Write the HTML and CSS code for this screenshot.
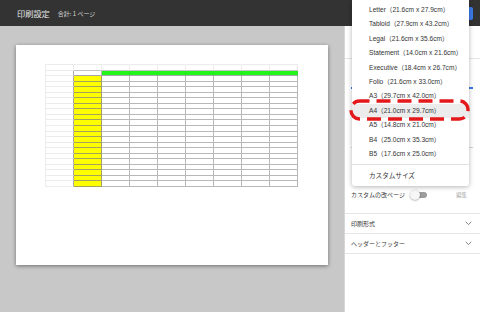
FILE: index.html
```html
<!DOCTYPE html>
<html lang="ja">
<head>
<meta charset="utf-8">
<title>印刷設定</title>
<link rel="stylesheet" href="styles.css">
</head>
<body>
<div class="app">
  <header class="header">
    <span class="title">印刷設定</span>
    <span class="subtitle">合計: 1 ページ</span>
    <span class="next-btn"></span>
  </header>
  <div class="main">
    <section class="canvas">
      <div class="page">
        <div class="sheet">
          <div class="t0"></div><div class="t"></div><div class="t"></div><div class="t"></div><div class="t"></div><div class="t"></div><div class="t"></div><div class="t"></div><div class="t"></div>
          <div class="h"></div><div class="w"></div><div class="g"></div><div class="g"></div><div class="g"></div><div class="g"></div><div class="g"></div><div class="g"></div><div class="g"></div>
          <div class="h"></div><div class="y"></div><div></div><div></div><div></div><div></div><div></div><div></div><div></div>
          <div class="h"></div><div class="y"></div><div></div><div></div><div></div><div></div><div></div><div></div><div></div>
          <div class="h"></div><div class="y"></div><div></div><div></div><div></div><div></div><div></div><div></div><div></div>
          <div class="h"></div><div class="y"></div><div></div><div></div><div></div><div></div><div></div><div></div><div></div>
          <div class="h"></div><div class="y"></div><div></div><div></div><div></div><div></div><div></div><div></div><div></div>
          <div class="h"></div><div class="y"></div><div></div><div></div><div></div><div></div><div></div><div></div><div></div>
          <div class="h"></div><div class="y"></div><div></div><div></div><div></div><div></div><div></div><div></div><div></div>
          <div class="h"></div><div class="y"></div><div></div><div></div><div></div><div></div><div></div><div></div><div></div>
          <div class="h"></div><div class="y"></div><div></div><div></div><div></div><div></div><div></div><div></div><div></div>
          <div class="h"></div><div class="y"></div><div></div><div></div><div></div><div></div><div></div><div></div><div></div>
          <div class="h"></div><div class="y"></div><div></div><div></div><div></div><div></div><div></div><div></div><div></div>
          <div class="h"></div><div class="y"></div><div></div><div></div><div></div><div></div><div></div><div></div><div></div>
          <div class="h"></div><div class="y"></div><div></div><div></div><div></div><div></div><div></div><div></div><div></div>
          <div class="h"></div><div class="y"></div><div></div><div></div><div></div><div></div><div></div><div></div><div></div>
          <div class="h"></div><div class="y"></div><div></div><div></div><div></div><div></div><div></div><div></div><div></div>
          <div class="h"></div><div class="y"></div><div></div><div></div><div></div><div></div><div></div><div></div><div></div>
          <div class="h"></div><div class="y"></div><div></div><div></div><div></div><div></div><div></div><div></div><div></div>
          <div class="h"></div><div class="y"></div><div></div><div></div><div></div><div></div><div></div><div></div><div></div>
          <div class="h"></div><div class="y"></div><div></div><div></div><div></div><div></div><div></div><div></div><div></div>
          <div class="h"></div><div class="y"></div><div></div><div></div><div></div><div></div><div></div><div></div><div></div>
        </div>
      </div>
    </section>
    <aside class="panel">
      <div class="p-top"></div>
      <div class="sel sel-active"></div>
      <div class="sel sel-plain"></div>
      <div class="toggle-row">
        <span class="toggle-label">カスタムの改ページ</span>
        <span class="toggle"><span class="track"></span><span class="knob"></span></span>
        <span class="edit">編集</span>
      </div>
      <div class="acc-list">
        <div class="acc"><span>印刷形式</span><svg class="chev" width="7" height="5" viewBox="0 0 7 5"><path d="M0.8 0.8 L3.5 3.6 L6.2 0.8" fill="none" stroke="#777" stroke-width="0.9"/></svg></div>
        <div class="acc"><span>ヘッダーとフッター</span><svg class="chev" width="7" height="5" viewBox="0 0 7 5"><path d="M0.8 0.8 L3.5 3.6 L6.2 0.8" fill="none" stroke="#777" stroke-width="0.9"/></svg></div>
      </div>
    </aside>
  </div>
</div>

<ul class="menu">
  <li class="item">Letter（21.6cm x 27.9cm）</li>
  <li class="item">Tabloid（27.9cm x 43.2cm）</li>
  <li class="item">Legal（21.6cm x 35.6cm）</li>
  <li class="item">Statement（14.0cm x 21.6cm）</li>
  <li class="item">Executive（18.4cm x 26.7cm）</li>
  <li class="item">Folio（21.6cm x 33.0cm）</li>
  <li class="item">A3（29.7cm x 42.0cm）</li>
  <li class="item selected">A4（21.0cm x 29.7cm）</li>
  <li class="item">A5（14.8cm x 21.0cm）</li>
  <li class="item">B4（25.0cm x 35.3cm）</li>
  <li class="item">B5（17.6cm x 25.0cm）</li>
  <li class="divider"></li>
  <li class="item custom">カスタムサイズ</li>
</ul>

<svg class="mark" width="126" height="26" viewBox="0 0 126 26">
  <rect x="3" y="3" width="117" height="18" rx="8.5" ry="8.5" fill="none" stroke="#e3191b" stroke-width="3.4" stroke-dasharray="14 7" stroke-dashoffset="4"/>
</svg>
</body>
</html>
```

FILE: styles.css
```css
* { box-sizing: border-box; }
html, body { margin: 0; padding: 0; }
body {
  width: 480px;
  height: 312px;
  overflow: hidden;
  position: relative;
  font-family: "Liberation Sans", "Noto Sans CJK JP", sans-serif;
  background: #c8c8c8;
}
.app { display: flex; flex-direction: column; height: 312px; }

.header {
  height: 26px;
  flex: none;
  background: #333333;
  display: flex;
  align-items: center;
  padding-left: 17px;
}
.title { color: #e6e6e6; font-size: 8.2px; font-family: "Noto Sans CJK JP", sans-serif; }
.subtitle { color: #d8d8d8; font-size: 6px; margin-left: 8px; font-family: "Noto Sans CJK JP", sans-serif; }
.next-btn {
  margin-left: auto;
  margin-right: 7px;
  width: 40px;
  height: 13px;
  background: #3b7be9;
  border-radius: 2px;
}

.main { display: flex; flex: 1; }
.canvas {
  width: 344px;
  flex: none;
  background: #c8c8c8;
  padding: 19px 0 0 16px;
}
.page {
  width: 312px;
  height: 220px;
  background: #fff;
  box-shadow: 0 1px 4px rgba(0, 0, 0, 0.45);
  padding: 19px 0 0 29px;
}
.sheet {
  display: grid;
  grid-template-columns: repeat(9, 28px);
  grid-template-rows: repeat(22, 1fr);
  width: 253px;
  height: 123px;
  border-top: 1px solid #ececec;
  border-left: 1px solid #ececec;
}
.sheet div {
  border-right: 1px solid #b8b8b8;
  border-bottom: 1px solid #b8b8b8;
}
.sheet .t0 { border-right-color: #ececec; border-bottom-color: #ececec; }
.sheet .t { border-right-color: #ececec; border-bottom-color: #c4c4c4; }
.sheet .h { border-right-color: #a8a8a8; border-bottom-color: #ececec; }
.sheet .w { background: #fff; border-bottom-color: #a8a8a8; }
.sheet .g { background: #22f51c; border-right-color: #2ae024; border-bottom-color: #a8a8a8; }
.sheet .y { background: #ffff00; border-bottom-color: #a3a35a; border-right-color: #a0a070; }

.panel {
  width: 136px;
  flex: none;
  background: #fff;
  border-left: 1px solid #d6d6d6;
  display: flex;
  flex-direction: column;
}
.p-top { height: 33px; border-bottom: 1px solid #e6e6e6; }
.sel { margin: 0 7px 0 6px; }
.sel-active { height: 30px; border-bottom: 2px solid #3b7be9; }
.sel-plain { height: 59px; border-bottom: 1px solid #d4d4d4; }
.toggle-row {
  display: flex;
  align-items: center;
  height: 17px;
  margin-top: 38px;
  margin-bottom: 10px;
  padding-left: 6px;
  font-size: 6px;
  color: #333;
  font-family: "Noto Sans CJK JP", sans-serif;
}
.toggle { position: relative; width: 18px; height: 10px; margin-left: 5px; }
.track {
  position: absolute;
  left: 4px; top: 2px;
  width: 13px; height: 6px;
  border-radius: 3px;
  background: #9c9c9c;
}
.knob {
  position: absolute;
  left: 0; top: 0;
  width: 10px; height: 10px;
  border-radius: 50%;
  background: #f6f6f6;
  box-shadow: 0 0.5px 2px rgba(0, 0, 0, 0.4);
}
.edit { margin-left: auto; margin-right: 13px; color: #a8a8a8; font-size: 5.5px; }

.acc-list { border-top: 1px solid #e6e6e6; }
.acc {
  height: 20px;
  border-bottom: 1px solid #e6e6e6;
  display: flex;
  align-items: center;
  justify-content: space-between;
  padding: 0 8px 0 6px;
  font-size: 6px;
  color: #333;
  font-family: "Noto Sans CJK JP", sans-serif;
}
.chev { display: block; }

.menu {
  position: absolute;
  left: 352px;
  top: 0;
  width: 117px;
  height: 186px;
  margin: 0;
  padding: 3px 0 0 0;
  list-style: none;
  background: #fff;
  border-radius: 0 0 3px 3px;
  box-shadow: 0 1px 5px rgba(0, 0, 0, 0.3);
}
.item {
  height: 14.4px;
  line-height: 14.4px;
  padding-left: 17px;
  font-size: 6.6px;
  color: #333;
  white-space: nowrap;
}
.item.selected { background: #ececec; }
.divider { height: 1px; background: #e2e2e2; margin-top: 2.6px; }
.item.custom { height: 21px; line-height: 21px; }

.mark {
  position: absolute;
  left: 348px;
  top: 98px;
}
```
